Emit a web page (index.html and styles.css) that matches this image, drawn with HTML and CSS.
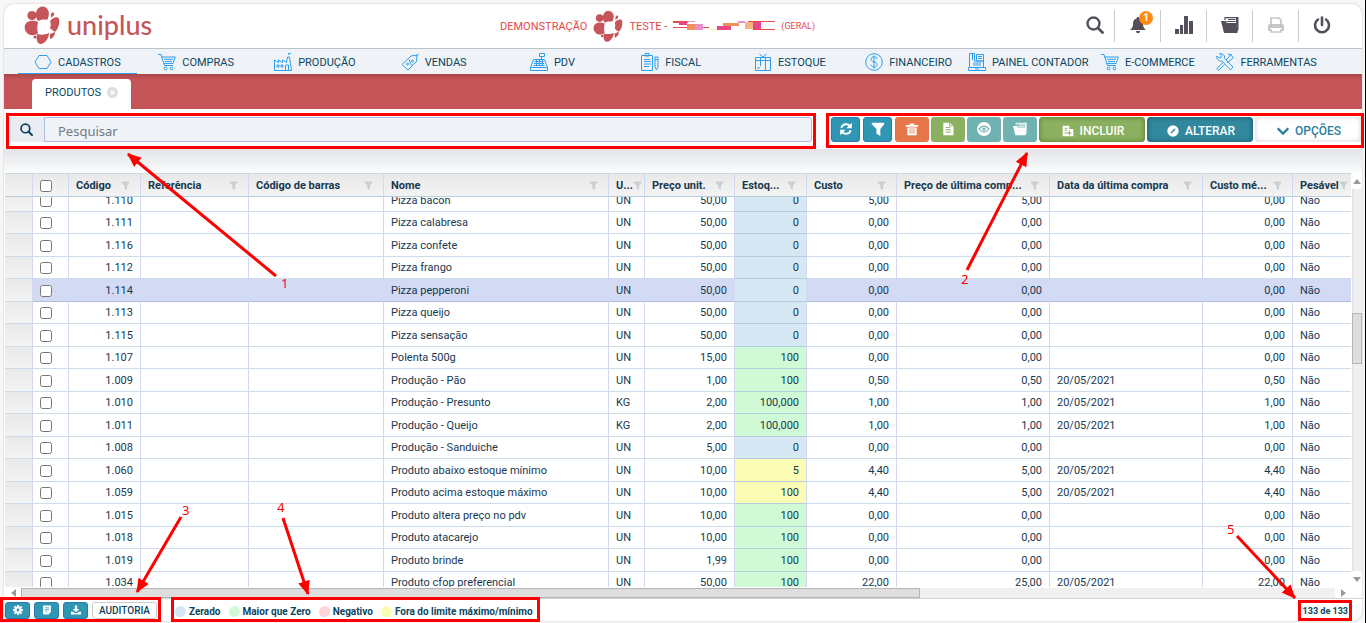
FILE: index.html
```html
<!DOCTYPE html>
<html lang="pt-br">
    <head>
        <meta charset="utf-8">
        <meta name="viewport" content="width=device-width, initial-scale=1.0">
        <title>Uniplus - Produtos</title>
        <link rel="stylesheet" href="styles.css">
    </head>
    <body>
        <!-- Icons -->
        <svg class="sprite" aria-hidden="true">
            <symbol id="i-logo" viewBox="0 0 36 38">
                <g fill="#c65559">
                    <path d="M13 4c2-4 8-5 11 0c2 4 0 8-1 10c-3-1-7 0-9 1c-2-3-3-7-1-11z"/>
                    <circle cx="8" cy="9.500" r="4.600"/>
                    <path d="M1 19c2-5 9-5 13-3c-1 4-1 8 0 11c-3 3-8 3-11 0c-2-2-3-5-2-8z"/>
                    <path d="M27 8c2-3 4-1 3 1l-3 3z"/>
                    <path d="M26 15c3-4 8-5 9-2c1 5-1 10-4 13c-2-1-4-3-5-4c1-2 1-5 0-7z"/>
                    <path d="M13 28c4 1 8 1 12-1c0 4-3 10-8 11c-4 0-5-5-4-10z"/>
                    <path d="M26 28l5-2c0 4-3 7-5 7z"/>
                    <circle cx="11" cy="31" r="1.600"/>
                </g>
            </symbol>
            <symbol id="i-search" viewBox="0 0 18 18"><circle cx="7.500" cy="7.500" r="6" fill="none" stroke="currentColor" stroke-width="2.400"/><path d="M12 12l4.500 4.500" stroke="currentColor" stroke-width="2.800" stroke-linecap="round"/></symbol>
            <symbol id="i-bell" viewBox="0 0 18 18"><path fill="currentColor" d="M9 1c1 0 1.500.6 1.500 1.500C13 3 14 5 14 8c0 3 1 4.500 3 6H1c2-1.500 3-3 3-6c0-3 1-5 3.500-5.500C7.500 1.600 8 1 9 1zM7 15h4c0 3-4 3-4 0z"/></symbol>
            <symbol id="i-chart" viewBox="0 0 18 18"><path fill="currentColor" d="M0 13h4v5H0zM5 9h3v9H5zM9 0h4v18H9zM14 5h4v13h-4z"/></symbol>
            <symbol id="i-folder" viewBox="0 0 18 18"><path fill="currentColor" d="M0 5h4.500L6 7h9.500l1 10H3z"/><path fill="none" stroke="currentColor" stroke-width="1.200" d="M4 4V1.600h11.500M5.500 5.500h9M7 3.500h7.500"/><path fill="currentColor" d="M15 1h2.500v13L16.500 16L15 7z"/></symbol>
            <symbol id="i-print" viewBox="0 0 18 18"><path fill="none" stroke="currentColor" stroke-width="1.700" d="M4 9V2h8l2 2v5M4 13v3h10v-3"/><path fill="currentColor" d="M1 10c0-1 1-2 2-2h12c1 0 2 1 2 2v5h-2v-3H3v3H1z"/></symbol>
            <symbol id="i-power" viewBox="0 0 18 18"><path fill="none" stroke="currentColor" stroke-width="2.600" stroke-linecap="round" d="M5 3.500a7 7 0 1 0 8 0M9 1.500V9"/></symbol>
            <symbol id="i-hexagon" viewBox="0 0 18 18"><path d="M5 2.500h8L17 9l-4 6.500H5L1 9z"/></symbol>
            <symbol id="i-cart" viewBox="0 0 18 18"><path d="M0 1.500h3l3.500 11H15M3.500 4h13.800L15 10.500H6M6 6.300h9M7 8.500h7"/><circle cx="7.500" cy="15.500" r="1.400"/><circle cx="13.500" cy="15.500" r="1.400"/></symbol>
            <symbol id="i-factory" viewBox="0 0 18 18"><path d="M.5 17.500V7l4 2.500V7l4 2.500V7l4 2.500L13.500 4h2l2 13.500zM3 12h2v2H3zM7 12h2v2H7zM11.500 17.500V12h3v5.500M14.500 2V.5H17"/></symbol>
            <symbol id="i-tag" viewBox="0 0 18 18"><path d="M1 11.500L10 3l6-1-.5 6.500L7 17zM15 3.500l3-3M8 6.500l2.500 6"/><circle cx="6.500" cy="11" r="1"/><circle cx="11.500" cy="8" r="1"/></symbol>
            <symbol id="i-register" viewBox="0 0 18 18"><path d="M3.500 6.500h11l3 8v3H.5v-3zM.5 14.500h17M11.500 6.500V4M9.500.5h5V3.500h-5zM4.500 8.500h9M4 10.500h10M3.500 12.500h11M6.500 7v6M9.500 7v6M12.500 7v6"/></symbol>
            <symbol id="i-clipboard" viewBox="0 0 18 18"><path d="M.5 2.500h11v15H.5zM4 3V.5h4V3zM3 6.500h6M3 8.500h7M3 11h7M3 13.500h5M14 4h3v10l-1.500 3L14 14zM14 6.500h3"/></symbol>
            <symbol id="i-box" viewBox="0 0 18 18"><path d="M1.500 4.500h15v13h-15zM1.500 7.500h15M6.500 4v9M11.500 4v13M9 4L5.500 1M9 4l3.500-3M3 15h3"/></symbol>
            <symbol id="i-money" viewBox="0 0 18 18"><circle cx="9" cy="9" r="8.300"/><path d="M12 6c0-1.500-1.500-2.200-3-2.200S6 4.500 6 6.300c0 3.700 6 1.600 6 5.200C12 13.500 10.500 14 9 14s-3-.8-3-2.400M9 2.500v13"/></symbol>
            <symbol id="i-panel" viewBox="0 0 18 18"><path d="M1.500 14V.5h5V8h9v6M8.500 1.500h7V8h-7zM10 3.500h4M10 5.500h4M.5 14.500h17v3H.5zM4.500 1v6M7 16h4M5 10h8M5 12h8"/></symbol>
            <symbol id="i-tools" viewBox="0 0 18 18"><path d="M1 3l2 2 2-.5L5.500 2.500l-2-2 3 .5 2 2v2.500L17 14l-2.500 3L6 8H3.500l-3-3zM10 7l4.500-5 3 2.500L11 10M7 9.500l-6 6 1.500 2 6-6M12 1l4 1"/></symbol>
            <symbol id="i-refresh" viewBox="0 0 18 18"><path fill="none" stroke="currentColor" stroke-width="2.600" d="M3 7.500C4.500 2 11 1.500 14 5M15 10.500C13.500 16 7 16.500 4 13"/><path fill="currentColor" d="M16.500 1v7H9.500zM1.500 17v-7h7z"/></symbol>
            <symbol id="i-filter" viewBox="0 0 18 18"><path fill="currentColor" d="M1 1h16v2l-5 6v9l-5-3V9L1 3z"/></symbol>
            <symbol id="i-trash" viewBox="0 0 18 18"><path fill="currentColor" d="M1 4h5V2h6v2h5v2H1zM3 7h12v10H3z"/><path stroke="#e67647" d="M6.500 8v7M9 8v7M11.500 8v7"/></symbol>
            <symbol id="i-doc" viewBox="0 0 18 18"><path fill="currentColor" d="M3 1h8l5 4v12H3z"/><path fill="none" stroke="#8bb05f" stroke-width="1.200" d="M6 7h6M6 10h7M6 13h7M11 1v4h4"/></symbol>
            <symbol id="i-eye" viewBox="0 0 18 18"><circle cx="9" cy="9" r="9" fill="currentColor"/><path fill="none" stroke="#70b2b2" stroke-width="1.500" d="M2.500 9c4-5 9-5 13 0c-4 5-9 5-13 0z"/><circle cx="9" cy="9" r="2" fill="#70b2b2"/></symbol>
            <symbol id="i-add" viewBox="0 0 18 18"><path fill="currentColor" d="M1 1h10v5h6v11H1z"/><path stroke="#8bb05f" stroke-width="1.500" d="M4 5h4M4 8h3M4 12h10M11 8.500v7"/></symbol>
            <symbol id="i-edit" viewBox="0 0 18 18"><circle cx="9" cy="9" r="8.500" fill="currentColor"/><path stroke="#32889d" stroke-width="2.500" d="M6 12l6-6"/></symbol>
            <symbol id="i-down" viewBox="0 0 18 18"><path fill="none" stroke="currentColor" stroke-width="3.500" d="M1 5l8 8 8-8"/></symbol>
            <symbol id="i-gear" viewBox="0 0 18 18"><circle cx="9" cy="9" r="4.500" fill="none" stroke="currentColor" stroke-width="4"/><path stroke="currentColor" stroke-width="3.500" d="M9 0v4M9 14v4M0 9h4M14 9h4M2.500 2.500l3 3M12.500 12.500l3 3M2.500 15.500l3-3M12.500 5.500l3-3"/></symbol>
            <symbol id="i-note" viewBox="0 0 18 18"><path fill="currentColor" d="M2 1h14v11l-4 5H2z"/><path stroke="#2f96b4" stroke-width="1.300" d="M5 5h8M5 8h8M5 11h5"/></symbol>
            <symbol id="i-download" viewBox="0 0 18 18"><path fill="currentColor" d="M7 1h4v6h4l-6 6-6-6h4zM0 12h4l3 3h4l3-3h4v5H0z"/></symbol>
        </svg>

        <div class="app">
            <header class="header">
                <a class="brand" href="#"><svg class="brand-logo"><use href="#i-logo"/></svg>uniplus</a>
                <div class="company">
                    <span>DEMONSTRAÇÃO</span>
                    <svg class="company-logo"><use href="#i-logo"/></svg>
                    <span>TESTE -</span>
                    <svg class="mask" viewBox="0 0 102 10" aria-hidden="true">
                        <path fill="#e8474c" d="M0 0h15v2H0zM0 6h36v1H0zM75 0h27v1H75zM80 8h22v1H80z"/>
                        <path fill="#e8478c" d="M6 1h8v3H6zM44 5h14v4H44zM80 1h8v7h-8z"/>
                        <path fill="#f0905c" d="M14 3h8v6h-8zM50 2h16v3H50z"/>
                        <path fill="#e98fcb" d="M22 3h8v6h-8zM65 0h7v2h-7zM14 0h8v1h-8z"/>
                        <path fill="#f5b583" d="M72 1h8v7h-8z"/>
                        <path fill="#fbf3a8" d="M36 8h8v1h-8z"/>
                    </svg>
                    <small>(GERAL)</small>
                </div>
                <div class="tools">
                    <button class="tool" aria-label="Buscar"><svg><use href="#i-search"/></svg></button>
                    <button class="tool" aria-label="Avisos"><svg><use href="#i-bell"/></svg><span class="badge">1</span></button>
                    <button class="tool" aria-label="Gráficos"><svg><use href="#i-chart"/></svg></button>
                    <button class="tool" aria-label="Arquivos"><svg><use href="#i-folder"/></svg></button>
                    <button class="tool tool-off" aria-label="Imprimir"><svg><use href="#i-print"/></svg></button>
                    <button class="tool" aria-label="Sair"><svg><use href="#i-power"/></svg></button>
                </div>
            </header>

            <nav class="menu">
                <a class="active" href="#"><svg><use href="#i-hexagon"/></svg>CADASTROS</a>
                <a href="#"><svg><use href="#i-cart"/></svg>COMPRAS</a>
                <a href="#"><svg><use href="#i-factory"/></svg>PRODUÇÃO</a>
                <a href="#"><svg><use href="#i-tag"/></svg>VENDAS</a>
                <a href="#"><svg><use href="#i-register"/></svg>PDV</a>
                <a href="#"><svg><use href="#i-clipboard"/></svg>FISCAL</a>
                <a href="#"><svg><use href="#i-box"/></svg>ESTOQUE</a>
                <a href="#"><svg><use href="#i-money"/></svg>FINANCEIRO</a>
                <a href="#"><svg><use href="#i-panel"/></svg>PAINEL CONTADOR</a>
                <a href="#"><svg><use href="#i-cart"/></svg>E-COMMERCE</a>
                <a href="#"><svg><use href="#i-tools"/></svg>FERRAMENTAS</a>
            </nav>

            <div class="tabs">
                <div class="tab">PRODUTOS <button class="tab-close" aria-label="Fechar"><svg viewBox="0 0 12 12"><circle cx="6" cy="6" r="6" fill="#dedede"/><path d="M4 4l4 4M8 4l-4 4" stroke="#fff" stroke-width="1.500"/></svg></button></div>
            </div>

            <div class="toolbar">
                <form class="search">
                    <button class="search-btn" type="button" aria-label="Pesquisar"><svg><use href="#i-search"/></svg></button>
                    <input class="search-input" type="text" placeholder="Pesquisar" aria-label="Pesquisar">
                </form>
                <div class="actions">
                    <button class="btn blue small" aria-label="Atualizar"><svg><use href="#i-refresh"/></svg></button>
                    <button class="btn blue small" aria-label="Filtrar"><svg><use href="#i-filter"/></svg></button>
                    <button class="btn orange" aria-label="Excluir"><svg><use href="#i-trash"/></svg></button>
                    <button class="btn green" aria-label="Relatório"><svg><use href="#i-doc"/></svg></button>
                    <button class="btn teal" aria-label="Visualizar"><svg><use href="#i-eye"/></svg></button>
                    <button class="btn teal" aria-label="Arquivos"><svg><use href="#i-folder"/></svg></button>
                    <button class="btn wide include"><svg><use href="#i-add"/></svg>INCLUIR</button>
                    <button class="btn wide change"><svg><use href="#i-edit"/></svg>ALTERAR</button>
                    <button class="btn wide options"><svg><use href="#i-down"/></svg>OPÇÕES</button>
                </div>
            </div>
            <div class="shade"></div>

            <div class="grid">
                <div class="grid-scroll" id="scroll">
                    <table>
                        <colgroup>
                            <col class="c28"><col class="c36"><col class="c72"><col class="c108"><col class="c135"><col class="c225"><col class="c36"><col class="c90"><col class="c72"><col class="c90"><col class="c153"><col class="c153"><col class="c90"><col>
                        </colgroup>
                        <thead>
                            <tr>
                                <th></th>
                                <th><input type="checkbox" aria-label="Selecionar todos"></th>
                                <th><div>Código<svg><use href="#i-filter"/></svg></div></th>
                                <th><div>Referência<svg><use href="#i-filter"/></svg></div></th>
                                <th><div>Código de barras<svg><use href="#i-filter"/></svg></div></th>
                                <th><div>Nome<svg><use href="#i-filter"/></svg></div></th>
                                <th><div>U...<svg><use href="#i-filter"/></svg></div></th>
                                <th><div>Preço unit.<svg><use href="#i-filter"/></svg></div></th>
                                <th><div>Estoq...<svg><use href="#i-filter"/></svg></div></th>
                                <th><div>Custo<svg><use href="#i-filter"/></svg></div></th>
                                <th><div>Preço de última comp...<svg><use href="#i-filter"/></svg></div></th>
                                <th><div>Data da última compra<svg><use href="#i-filter"/></svg></div></th>
                                <th><div>Custo mé...<svg><use href="#i-filter"/></svg></div></th>
                                <th><div>Pesável<svg><use href="#i-filter"/></svg></div></th>
                            </tr>
                        </thead>
                        <tbody id="rows"></tbody>
                    </table>
                </div>
                <div class="vbar"><i class="arrow up"></i><div class="vtrack"><div class="vthumb"></div></div><i class="arrow down"></i></div>
                <div class="hbar"><i class="arrow left"></i><div class="htrack"><div class="hthumb"></div></div><i class="arrow right"></i></div>
            </div>

            <footer class="footer">
                <button class="mini" aria-label="Configurar"><svg><use href="#i-gear"/></svg></button>
                <button class="mini" aria-label="Notas"><svg><use href="#i-note"/></svg></button>
                <button class="mini" aria-label="Exportar"><svg><use href="#i-download"/></svg></button>
                <button class="audit">AUDITORIA</button>
                <ul class="legend">
                    <li class="zero">Zerado</li>
                    <li class="more">Maior que Zero</li>
                    <li class="less">Negativo</li>
                    <li class="limit">Fora do limite máximo/mínimo</li>
                </ul>
                <span class="count">133 de 133</span>
            </footer>
        </div>

        <!-- Numbered marks over the screen -->
        <svg class="marks" width="1366" height="623">
            <defs>
                <marker id="tip" markerUnits="userSpaceOnUse" markerWidth="14" markerHeight="12" refX="13" refY="6" orient="auto"><path d="M0 0l14 6-14 6z" fill="#f00"/></marker>
            </defs>
            <g fill="none" stroke="#f00" stroke-width="3">
                <rect x="7.500" y="114.500" width="807" height="33"/>
                <rect x="827.500" y="114.500" width="535" height="32"/>
                <rect x="1.500" y="598.500" width="158" height="22"/>
                <rect x="172.500" y="598.500" width="366" height="22"/>
                <rect x="1299.500" y="601.500" width="51" height="18"/>
                <path d="M276 276L128 154" marker-end="url(#tip)"/>
                <path d="M967 270L1027 153" marker-end="url(#tip)"/>
                <path d="M181 517L137 592" marker-end="url(#tip)"/>
                <path d="M283 518L308 594" marker-end="url(#tip)"/>
                <path d="M1237 536L1295 598" marker-end="url(#tip)"/>
            </g>
            <g fill="#f00">
                <text x="281" y="288">1</text>
                <text x="961" y="284">2</text>
                <text x="182" y="515">3</text>
                <text x="277" y="512">4</text>
                <text x="1227" y="534">5</text>
            </g>
        </svg>

        <script>
            // codigo, nome, unidade, preco, estoque, cor, custo, ultima compra, data, custo medio
            const produtos = [
                ["1.110", "Pizza bacon", "UN", "50,00", "0", "zero", "5,00", "5,00", "", "0,00"],
                ["1.111", "Pizza calabresa", "UN", "50,00", "0", "zero", "0,00", "0,00", "", "0,00"],
                ["1.116", "Pizza confete", "UN", "50,00", "0", "zero", "0,00", "0,00", "", "0,00"],
                ["1.112", "Pizza frango", "UN", "50,00", "0", "zero", "0,00", "0,00", "", "0,00"],
                ["1.114", "Pizza pepperoni", "UN", "50,00", "0", "zero", "0,00", "0,00", "", "0,00"],
                ["1.113", "Pizza queijo", "UN", "50,00", "0", "zero", "0,00", "0,00", "", "0,00"],
                ["1.115", "Pizza sensação", "UN", "50,00", "0", "zero", "0,00", "0,00", "", "0,00"],
                ["1.107", "Polenta 500g", "UN", "15,00", "100", "more", "0,00", "0,00", "", "0,00"],
                ["1.009", "Produção - Pão", "UN", "1,00", "100", "more", "0,50", "0,50", "20/05/2021", "0,50"],
                ["1.010", "Produção - Presunto", "KG", "2,00", "100,000", "more", "1,00", "1,00", "20/05/2021", "1,00"],
                ["1.011", "Produção - Queijo", "KG", "2,00", "100,000", "more", "1,00", "1,00", "20/05/2021", "1,00"],
                ["1.008", "Produção - Sanduiche", "UN", "5,00", "0", "zero", "0,00", "0,00", "", "0,00"],
                ["1.060", "Produto abaixo estoque mínimo", "UN", "10,00", "5", "limit", "4,40", "5,00", "20/05/2021", "4,40"],
                ["1.059", "Produto acima estoque máximo", "UN", "10,00", "100", "limit", "4,40", "5,00", "20/05/2021", "4,40"],
                ["1.015", "Produto altera preço no pdv", "UN", "10,00", "100", "more", "0,00", "0,00", "", "0,00"],
                ["1.018", "Produto atacarejo", "UN", "10,00", "100", "more", "0,00", "0,00", "", "0,00"],
                ["1.019", "Produto brinde", "UN", "1,99", "100", "more", "0,00", "0,00", "", "0,00"],
                ["1.034", "Produto cfop preferencial", "UN", "50,00", "100", "more", "22,00", "25,00", "20/05/2021", "22,00"]
            ];

            let html = "";
            for (const p of produtos) {
                html += `<tr${p[0] == "1.114" ? ' class="selected"' : ""}>
                    <td class="handle"></td>
                    <td class="check"><input type="checkbox" aria-label="Selecionar ${p[0]}"></td>
                    <td class="num">${p[0]}</td><td></td><td></td>
                    <td>${p[1]}</td><td>${p[2]}</td>
                    <td class="num">${p[3]}</td>
                    <td class="num ${p[5]}">${p[4]}</td>
                    <td class="num">${p[6]}</td>
                    <td class="num">${p[7]}</td>
                    <td>${p[8]}</td>
                    <td class="num">${p[9]}</td>
                    <td>Não</td>
                </tr>`;
            }
            document.getElementById("rows").innerHTML = html;
            document.getElementById("scroll").scrollTop = 8;
        </script>
    </body>
</html>
```
FILE: styles.css
```css
* {
    box-sizing:border-box;
}

body {
    margin:0;
    height:100vh;
    padding:4px 3px 2px 4px;
    display:flex;
    flex-direction:column;
    background:#f7f7f7;
    border-right:1px solid #000;
    color:#0b4560;
    font-family:Roboto, sans-serif;
    font-size:11px;
    overflow:hidden;
}

button, input {
    font-family:inherit;
    font-size:inherit;
    margin:0;
}

button {
    display:flex;
    align-items:center;
    justify-content:center;
    padding:0;
    border:0;
    background:none;
    color:inherit;
}

a {
    color:inherit;
    text-decoration:none;
}

.sprite {
    position:absolute;
    width:0;
    height:0;
}

.app {
    flex:1;
    min-height:0;
    display:flex;
    flex-direction:column;
    background:#fff;
    border-radius:10px;
    box-shadow:0 0 2px #bbb;
}

/* Header */
.header {
    height:45px;
    flex:none;
    display:grid;
    grid-template-columns:9fr auto 10fr;
    align-items:center;
    padding:0 18px 0 20px;
    border-bottom:1px solid #b9c4c9;
}

.brand {
    display:flex;
    align-items:center;
    gap:7px;
    color:#c65559;
    font:500 27px/38px Lato, sans-serif;
    height:44px;
    padding-bottom:2px;
}

.brand-logo {
    width:36px;
    height:38px;
}

.company {
    display:flex;
    align-items:center;
    gap:6px;
    color:#e8474c;
}

.company-logo {
    width:30px;
    height:32px;
}

.company small {
    font-size:9px;
}

.mask {
    width:102px;
    height:10px;
}

.tools {
    display:flex;
    justify-content:flex-end;
}

.tool {
    position:relative;
    width:46px;
    height:32px;
    padding-bottom:3px;
    color:#544f59;
    border-left:1px solid #ccc;
}

.tool:first-child {
    border-left:0;
    width:38px;
}

.tool svg {
    width:18px;
    height:18px;
}

.tool-off {
    color:#c6c6c6;
}

.badge {
    position:absolute;
    top:1px;
    right:7px;
    width:14px;
    height:14px;
    border-radius:50%;
    background:#ff8c12;
    color:#fff;
    font:700 10px/14px Roboto, sans-serif;
}

/* Menu */
.menu {
    height:25px;
    flex:none;
    display:grid;
    grid-template-columns:repeat(11, 1fr);
    padding:0 36px 0 14px;
    background:#eff3f7;
}

.menu a {
    display:flex;
    align-items:center;
    justify-content:center;
    gap:6px;
    padding-top:2px;
    white-space:nowrap;
    border-bottom:1px solid transparent;
}

.menu .active {
    border-color:#2e9fee;
}

.menu svg {
    width:18px;
    height:18px;
    flex:none;
    fill:none;
    stroke:#2e9fee;
}

.tabs {
    height:35px;
    flex:none;
    display:flex;
    align-items:flex-end;
    padding-left:28px;
    background:linear-gradient(#a9464a, #c65559 6px);
}

.tab {
    display:flex;
    align-items:center;
    gap:6px;
    height:30px;
    padding:0 13px 3px;
    border-radius:4px 4px 0 0;
    background:#fff;
}

.tab-close svg {
    width:11px;
    height:11px;
}

/* Search and actions */
.toolbar {
    height:40px;
    flex:none;
    display:flex;
    align-items:center;
    gap:19px;
    padding:5px 1px 5px 5px;
}

.search {
    flex:1;
    display:flex;
    height:25px;
}

.search-btn {
    width:35px;
    background:#e9edf1;
}

.search-btn svg {
    width:13px;
    height:13px;
}

.search-input {
    flex:1;
    padding:4px 13px 0;
    border:1px solid #adbce0;
    border-radius:0 3px 3px 0;
    background:#eff3f7;
    font:13px "Noto Sans", sans-serif;
}

.search-input::placeholder {
    color:#737a80;
}

.actions {
    display:flex;
    gap:2px;
}

.btn {
    width:34px;
    height:25px;
    border-radius:3px;
    color:#fff;
    font-size:12px;
}

.btn svg {
    width:14px;
    height:14px;
}

.small {
    width:29px;
    margin-right:1px;
}

.blue {
    background:#2f96b4;
    border:1px solid #2a7bab;
}

.orange {
    background:#e67647;
}

.green {
    background:#8bb05f;
}

.teal {
    background:#70b2b2;
}

.wide {
    width:106px;
    gap:6px;
    padding:3px 0 0 2px;
    font-weight:500;
}

.wide svg {
    width:12px;
    height:12px;
}

.include {
    background:#8bb05f;
    border:1px solid #6f9446;
    box-shadow:inset 0 0 4px #64883b;
}

.change {
    background:#32889d;
    border:1px solid #26738a;
    box-shadow:inset 0 0 4px #1c6074;
}

.options {
    color:#2a7f99;
    box-shadow:inset 0 0 5px #ccc;
}

.shade {
    height:24px;
    flex:none;
    background:linear-gradient(#e3e4e8, #fbfcfd);
}

/* Grid */
.grid {
    flex:1;
    min-height:0;
    display:grid;
    grid-template:minmax(0, 1fr) 11px / minmax(0, 1fr) 11px;
    padding-left:1px;
}

.grid-scroll {
    overflow:hidden;
}

table {
    width:100%;
    table-layout:fixed;
    border-spacing:0;
    color:#17384f;
}

.c28 { width:28px; }
.c36 { width:36px; }
.c72 { width:72px; }
.c90 { width:90px; }
.c108 { width:108px; }
.c135 { width:135px; }
.c153 { width:153px; }
.c225 { width:225px; }

th {
    position:sticky;
    top:0;
    z-index:1;
    height:24px;
    padding:1px 7px 0;
    overflow:hidden;
    background:linear-gradient(#e9e9e9, #f3f3f3);
    border:1px solid #d0d9f0;
    border-width:1px 1px 1px 0;
    border-top-color:#cbd9df;
    border-bottom-color:#b9cddd;
    font-weight:700;
    text-align:left;
    white-space:nowrap;
}

th div {
    display:flex;
    align-items:center;
    justify-content:space-between;
}

th svg {
    width:9px;
    height:9px;
    margin-right:3px;
    flex:none;
    color:#c9cfd4;
}

td {
    height:23px;
    padding:0 7px;
    border:1px solid #d0d9f0;
    border-width:0 1px 1px 0;
    border-bottom-color:#cedbe9;
    line-height:15px;
    white-space:nowrap;
}

tr:nth-child(even) td {
    height:22px;
}

.check {
    padding:1px 7px 0;
}

tr > :last-child {
    border-right:0;
}

input[type="checkbox"] {
    display:block;
    width:12px;
    height:12px;
}

.handle {
    background:linear-gradient(#e9e9e9, #f3f3f3);
}

.num {
    text-align:right;
}

.zero { background:#d7e8f5; }
.more { background:#d0fad5; }
.less { background:#ffd5da; }
.limit { background:#fbfdb5; }

td.zero, td.more, td.limit {
    border-bottom-color:#b4cde1;
}

.selected td:not(.handle, .zero) {
    background:#d3daf4;
    border-right-color:#d3daf4;
    border-bottom-color:#b0bde0;
}

/* Scrollbars */
.vbar {
    display:flex;
    flex-direction:column;
    align-items:center;
    background:#fff;
}

.vtrack {
    flex:1;
    width:10px;
    display:grid;
    grid-template-rows:124fr 51fr 208fr;
    background:#f0f0f0;
    box-shadow:inset 1px 0 2px #ddd;
}

.vthumb {
    grid-row:2;
    background:#dedede;
    border:1px solid #b5b5b5;
}

.hbar {
    grid-column:1 / 3;
    display:flex;
    align-items:center;
    padding-right:11px;
    background:#fff;
}

.htrack {
    flex:1;
    height:10px;
    display:grid;
    grid-template-columns:13fr 6fr;
    background:#f0f0f0;
}

.hthumb {
    background:#dedede;
    border:1px solid #b5b5b5;
}

.arrow {
    flex:none;
    width:16px;
    height:16px;
    display:flex;
    align-items:center;
    justify-content:center;
}

.arrow::before {
    content:"";
    border:4px solid transparent;
}

.up::before { border-top:0; border-bottom:5px solid #999; }
.down::before { border-bottom:0; border-top:5px solid #999; }
.left::before { border-left:0; border-right:5px solid #999; }
.right::before { border-right:0; border-left:5px solid #999; }

/* Footer */
.footer {
    height:23px;
    flex:none;
    display:flex;
    align-items:center;
    gap:4px;
    padding:0 14px 0 1px;
    border-top:1px solid #cbd6dc;
}

.mini {
    width:25px;
    height:17px;
    border-radius:3px;
    border:1px solid #2a7bab;
    background:#2f96b4;
    color:#fff;
}

.mini svg {
    width:10px;
    height:10px;
}

.audit {
    width:65px;
    height:17px;
    border:1px solid #c8cdd0;
    border-radius:3px;
    background:#fff;
    font-size:10px;
    font-weight:500;
}

.legend {
    display:flex;
    gap:8px;
    margin:0 auto 0 14px;
    padding:2px 0 0;
    list-style:none;
    font-size:10px;
    font-weight:700;
}

.legend li {
    display:flex;
    align-items:center;
    gap:3px;
    background:none;
}

.legend li::before {
    content:"";
    width:11px;
    height:11px;
    border-radius:50%;
}

.zero::before { background:#d7e8f5; }
.more::before { background:#d0fad5; }
.less::before { background:#ffd5da; }
.limit::before { background:#fbfdb5; }

.count {
    padding-top:2px;
    font-size:9px;
    font-weight:700;
}

.marks {
    position:absolute;
    top:0;
    left:0;
    z-index:2;
    pointer-events:none;
    font:13px "Noto Sans", sans-serif;
}
```
